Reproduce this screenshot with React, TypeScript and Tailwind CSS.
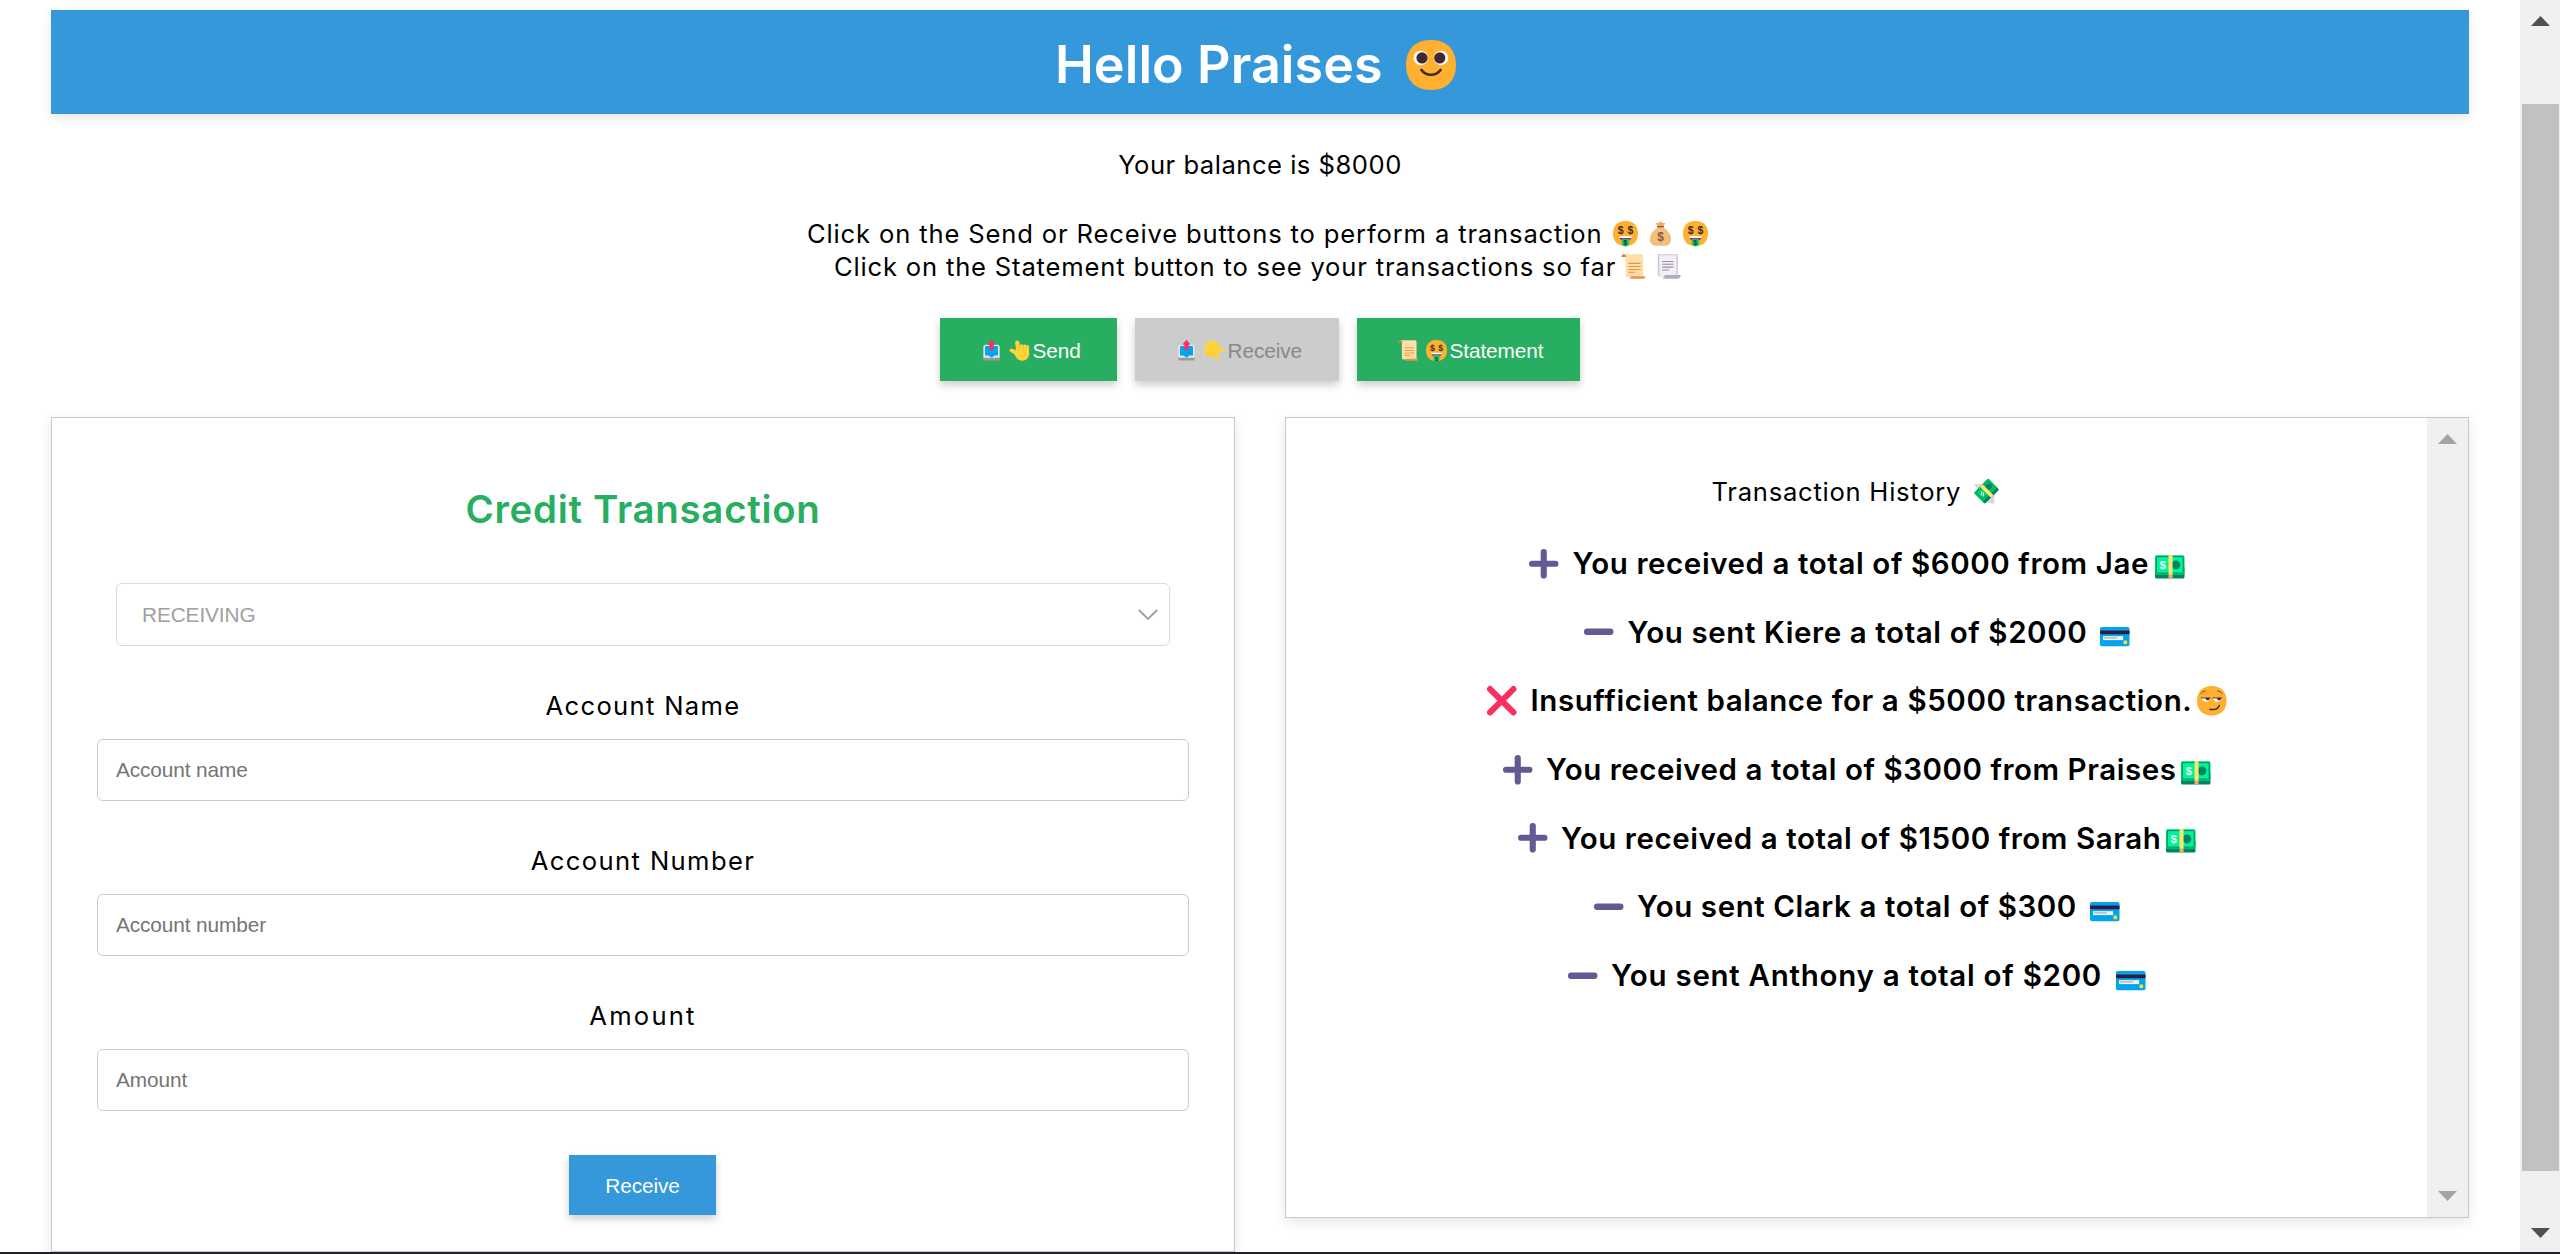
import type { ReactNode } from 'react';

type IconProps = { className?: string };

const Svg = ({ className = '', children }: { className?: string; children: ReactNode }) => (
  <svg viewBox="0 0 24 24" className={`block shrink-0 overflow-visible ${className}`} aria-hidden="true">
    {children}
  </svg>
);

const FACE = 'M12 0C20.2 0 24 5.2 24 12S20.2 24 12 24 0 18.800 0 12 3.800 0 12 0z';

const Dollar = ({ x, y, size, fill }: { x: number; y: number; size: number; fill: string }) => (
  <text x={x} y={y} fontSize={size} fontWeight="700" fontFamily="Liberation Sans, sans-serif" textAnchor="middle" fill={fill}>
    $
  </text>
);

const SmileFace = ({ className }: IconProps) => (
  <Svg className={className}>
    <path d={FACE} fill="#ffb02e" />
    <circle cx="7.1" cy="8.600" r="3.500" fill="#fff" />
    <circle cx="16.800" cy="8.600" r="3.500" fill="#fff" />
    <circle cx="7.700" cy="8.600" r="2.700" fill="#402a32" />
    <circle cx="16.200" cy="8.600" r="2.700" fill="#402a32" />
    <path d="M7.400 14.400C8.600 16 10.100 16.700 12 16.700S15.400 16 16.600 14.400" fill="none" stroke="#402a32" strokeWidth="1.250" strokeLinecap="round" />
  </Svg>
);

const MoneyFace = ({ className }: IconProps) => (
  <Svg className={className}>
    <path d={FACE} fill="#ffb02e" />
    <Dollar x={7.300} y={12.600} size={10} fill="#402a32" />
    <Dollar x={16.700} y={12.600} size={10} fill="#402a32" />
    <path d="M6 15.300h12c0 2.200-2.400 3.800-6 3.800s-6-1.600-6-3.800z" fill="#bb1d80" />
    <path d="M6 14.600h12v1.700H6.200z" fill="#fff" />
    <path d="M8.500 17.200h7v3.700a3.500 3.500 0 0 1-7 0z" fill="#00d26a" />
    <Dollar x={12} y={23.500} size={6.500} fill="#402a32" />
  </Svg>
);

const MoneyBag = ({ className }: IconProps) => (
  <Svg className={className}>
    <path d="M7.500 1.800l2.400.2L12 .2l2.100 1.800 2.500-.2L14.900 5H9.200z" fill="#f3ad61" />
    <path d="M9 6.200h6c4.200 3.200 7.200 6.700 7.200 11.300 0 4.200-2.800 6.300-6.300 6.300H8.100c-3.500 0-6.300-2.100-6.300-6.300C1.800 12.900 4.800 9.400 9 6.200z" fill="#f3c07b" />
    <path d="M9.300 5.600h5.400" stroke="#8c5543" strokeWidth="1.500" strokeLinecap="round" />
    <Dollar x={12} y={19.500} size={11.500} fill="#8c5543" />
  </Svg>
);

const Scroll = ({ className }: IconProps) => (
  <Svg className={className}>
    <path d="M2.500.3h16.700c1.300 0 2 .8 2 2v19.900H6.500c-1.300 0-2-.9-2-2V3z" fill="#ffdea7" />
    <path d="M.3 2.800C.3 1.200 1.300.3 2.700.3s2.200 1 2.200 2.500z" fill="#d3883e" />
    <path d="M9.500 21.300h13.800c0 1.500-1 2.500-2.500 2.500H6.500c1.900 0 2.900-1 3-2.500z" fill="#e19747" />
    <path d="M7.200 9h11.600M7.200 12h11.600M7.200 14.900h11.600M7.200 17.600h6.500" stroke="#e19747" strokeWidth="1" />
  </Svg>
);

const Page = ({ className }: IconProps) => (
  <Svg className={className}>
    <path d="M2.700.2h17.200c.6 0 1 .4 1 1V22H5C3 22 1.700 21 1.700 19V1.200c0-.6.4-1 1-1z" fill="#cdc4d6" />
    <path d="M3.200 1.200h16.300v19.600H7.500C6.900 23 3.200 22.500 3.200 19.200z" fill="#f3eef8" />
    <path d="M8.500 20.200h15.200c0 2.400-1.200 3.600-3.300 3.600H5.200c2.200 0 3.100-1.600 3.300-3.600z" fill="#b4acbc" />
    <path d="M6 7.200h10.800M6 9.900h10.800M6 12.600h10.800M6 15.400h6.500" stroke="#998ea4" strokeWidth="1" />
  </Svg>
);

const Outbox = ({ className }: IconProps) => (
  <Svg className={className}>
    <path d="M2.700 18h18.600v4.200c0 .7-.5 1.200-1.200 1.200H3.900c-.7 0-1.200-.5-1.200-1.200z" fill="#9b9b9b" />
    <path d="M5.300 5.300h13.400c1.500 0 2.600 1.100 2.600 2.600v12.300H2.700V7.900c0-1.500 1.100-2.600 2.600-2.600z" fill="#e6e6e6" />
    <path d="M6 6.800h12c.8 0 1.400.6 1.400 1.400v9.600h-4L12 20.400l-3.400-2.600h-4V8.200c0-.8.6-1.400 1.400-1.400z" fill="#00a6ed" />
    <path d="M11.300.5c.4-.5 1-.5 1.400 0l3.200 3.700c.4.6.1 1.300-.6 1.300h-.9v4.200a2.400 2.400 0 0 1-4.800 0V5.500h-.9c-.7 0-1-.7-.6-1.300z" fill="#f92f60" />
  </Svg>
);

const Hand = ({ className }: IconProps) => (
  <Svg className={className}>
    <path d="M7 3c-.2-3 4.400-3.500 4.800-.5l.6 4.200C13 4.300 15.500 4.200 16.100 6c.8-1.400 3.100-1.300 3.600.4 1.300-1 3.300-.3 3.300 1.700v7.700c0 4.500-3.400 7.900-7.900 7.900-3.300 0-5.600-1.500-7.200-4.200l-1.700-3.100-4.700-3c-2-1.400-.5-4.200 1.900-3.500l4.700 1.600z" fill="#ffd43b" />
    <path d="M12.300 6v4.600M16.200 6v4.300M19.800 6.700v3.400" stroke="#f5b62c" strokeWidth=".8" strokeLinecap="round" />
  </Svg>
);

const FlyingMoney = ({ className }: IconProps) => (
  <Svg className={className}>
    <path d="M0 5l8.500-.5L4.200 11zM12 22l7.500-8v10z" fill="#d9d9d9" />
    <g transform="rotate(-45 12 12)">
      <rect x="2.500" y="4.300" width="19.500" height="15" rx="1.200" fill="#008463" />
      <rect x="2.500" y="4.300" width="19.500" height="11.800" rx="1.200" fill="#00d26a" />
      <rect x="4.200" y="5.700" width="16" height="9" rx=".6" fill="none" stroke="#008463" strokeWidth=".9" />
      <circle cx="16.700" cy="10.200" r="3" fill="#008463" />
      <path d="M6 10.800l3-2M6.500 12.700l3-2" stroke="#f4f4f4" strokeWidth="1" />
      <path d="M10.700 4.300h3.600v15h-3.600z" fill="#ffe570" />
    </g>
  </Svg>
);

const Banknote = ({ className }: IconProps) => (
  <Svg className={className}>
    <rect x="0" y="14" width="24" height="10" rx="1.300" fill="#008463" />
    <rect x="0" y="5" width="24" height="16" rx="1.300" fill="#00d26a" />
    <rect x="1.100" y="6.200" width="21.800" height="13.400" rx=".5" fill="#00f397" stroke="#008463" strokeWidth=".7" />
    <circle cx="17" cy="13" r="3.600" fill="#008463" />
    <Dollar x={6.300} y={16.500} size={9.500} fill="#e9fff5" />
    <path d="M11 5h3.300v16H11z" fill="#ffe570" />
    <path d="M11 21h3.300v3H11z" fill="#f9a66c" />
  </Svg>
);

const Card = ({ className }: IconProps) => (
  <Svg className={className}>
    <rect x="0" y="8.200" width="24" height="15.600" rx="1.400" fill="#00a6ed" />
    <path d="M0 11h24v3H0z" fill="#321b41" />
    <path d="M2.500 15.600h16.300v3.200H2.500z" fill="#f4f4f4" />
    <path d="M3.500 17h10.300" stroke="#9b9b9b" strokeWidth=".8" />
    <rect x="19.100" y="19.200" width="3" height="3" rx=".4" fill="#fcd53f" />
  </Svg>
);

const SmirkFace = ({ className }: IconProps) => (
  <Svg className={className}>
    <path d={FACE} fill="#ffb02e" />
    <path d="M3.800 9.700h6.600c0 4.300-6.400 4-6.600 0zM13.200 9.700h6.600c-.2 4-6.600 4.300-6.600 0z" fill="#fff" />
    <path d="M7 9.700h3.300c0 2.400-3.200 2.600-3.300 0zM16.300 9.700h3.300c0 2.400-3.200 2.600-3.300 0z" fill="#402a32" />
    <path d="M3.500 9.700h7M13 9.700h7" stroke="#402a32" strokeWidth=".7" strokeLinecap="round" />
    <path d="M3.200 6.200C4.200 4.800 5.200 4.200 6.700 4M16.800 4c1.500.2 2.600.9 3.500 2.200" fill="none" stroke="#7a4a25" strokeWidth=".8" strokeLinecap="round" />
    <path d="M10.500 19c4 .6 6.800-.7 7.700-3.200" fill="none" stroke="#402a32" strokeWidth="1.200" strokeLinecap="round" />
  </Svg>
);

const Cross = ({ className }: IconProps) => (
  <Svg className={className}>
    <path d="M2.500 2.500l19 19M21.500 2.500l-19 19" stroke="#f92f60" strokeWidth="5" strokeLinecap="round" />
  </Svg>
);

const Plus = ({ className }: IconProps) => (
  <Svg className={className}>
    <path d="M2.500 12h19M12 2.500v19" stroke="#635994" strokeWidth="5" strokeLinecap="round" />
  </Svg>
);

const Minus = ({ className }: IconProps) => (
  <Svg className={className}>
    <path d="M2.600 12h18.800" stroke="#635994" strokeWidth="5.200" strokeLinecap="round" />
  </Svg>
);

const history = [
  { Lead: Plus, Tail: Banknote, text: 'You received a total of $6000 from Jae', fit: 'w-[582px] tracking-[0.583px]' },
  { Lead: Minus, Tail: Card, text: 'You sent Kiere a total of $2000', fit: 'w-[472px] tracking-[0.6px]' },
  { Lead: Cross, Tail: SmirkFace, text: 'Insufficient balance for a $5000 transaction.', fit: 'w-[666px] tracking-[0.59px]' },
  { Lead: Plus, Tail: Banknote, text: 'You received a total of $3000 from Praises', fit: 'w-[635px] tracking-[0.54px]' },
  { Lead: Plus, Tail: Banknote, text: 'You received a total of $1500 from Sarah', fit: 'w-[605px] tracking-[0.555px]' },
  { Lead: Minus, Tail: Card, text: 'You sent Clark a total of $300', fit: 'w-[453px] tracking-[0.57px]' },
  { Lead: Minus, Tail: Card, text: 'You sent Anthony a total of $200', fit: 'w-[505px] tracking-[0.72px]' },
];

const fields = [
  { label: 'Account Name', placeholder: 'Account name', tracking: 'tracking-[1.308px]' },
  { label: 'Account Number', placeholder: 'Account number', tracking: 'tracking-[1.399px]' },
  { label: 'Amount', placeholder: 'Amount', tracking: 'tracking-[2.21px]' },
];

const arial = "font-['Liberation_Sans',sans-serif] text-[20.8px] tracking-[-0.1px]";
const raised = 'shadow-[0_4px_8px_rgba(0,0,0,0.2)]';
const panel = 'h-full w-[1184px] border border-[#c8c8c8] shadow-[0_4px_12px_rgba(0,0,0,0.1)]';

const Triangle = ({ className = '' }: IconProps) => (
  <svg viewBox="0 0 19 10" className={`block h-[10px] w-[19px] ${className}`} aria-hidden="true">
    <path d="M9.500 0L19 10H0z" fill="currentColor" />
  </svg>
);

function Header() {
  return (
    <header className="flex h-[104px] shrink-0 items-center justify-center bg-[#3498db] pr-[9px] pt-[6px] shadow-[0_4px_10px_rgba(0,0,0,0.1)]">
      <h1 className="w-[351px] whitespace-nowrap text-[52px] font-semibold leading-none tracking-[0.085px] text-white">Hello Praises</h1>
      <SmileFace className="size-[50px]" />
    </header>
  );
}

function Intro() {
  return (
    <section className="mt-[34px] shrink-0 whitespace-nowrap">
      <p className="h-[33px] text-center tracking-[0.504px]">Your balance is $8000</p>
      <div className="mt-[36px] flex h-[33px] items-center justify-center pr-[5px]">
        <span className="w-[806px] tracking-[0.844px]">Click on the Send or Receive buttons to perform a transaction</span>
        <span className="flex gap-[10px]">
          <MoneyFace className="size-[25px]" />
          <MoneyBag className="size-[25px]" />
          <MoneyFace className="size-[25px]" />
        </span>
      </div>
      <div className="flex h-[33px] items-center justify-center pr-[5px]">
        <span className="w-[787px] tracking-[0.817px]">Click on the Statement button to see your transactions so far</span>
        <span className="flex gap-[10px]">
          <Scroll className="size-[25px]" />
          <Page className="size-[25px]" />
        </span>
      </div>
    </section>
  );
}

function Actions() {
  const base = `flex h-[63px] items-center pl-[40.500px] pt-[2px] ${arial} ${raised}`;
  return (
    <div className="mt-[35px] flex shrink-0 justify-center gap-[18px]">
      <button className={`${base} w-[177px] bg-[#27ae60] text-white`}>
        <Outbox className="mr-[7px] size-[21px]" />
        <Hand className="mr-[3px] size-[21px]" />
        <span>Send</span>
      </button>
      <button className={`${base} w-[204px] bg-[#ccc] text-[#888]`} disabled>
        <Outbox className="mr-[7px] size-[21px]" />
        <Hand className="mr-[3px] size-[21px] rotate-180" />
        <span>Receive</span>
      </button>
      <button className={`${base} w-[223px] bg-[#27ae60] text-white`}>
        <Scroll className="mr-[7px] size-[21px]" />
        <MoneyFace className="mr-[3px] size-[21px]" />
        <span>Statement</span>
      </button>
    </div>
  );
}

function CreditForm() {
  return (
    <section className={`${panel} flex flex-col items-center pt-[67px]`}>
      <h2 className="text-[38.400px] font-semibold leading-[48px] tracking-[0.72px] text-[#27ae60]">Credit Transaction</h2>
      <div className={`mt-[50px] flex h-[63px] w-[1054px] shrink-0 items-center justify-between rounded-[6px] border border-[#dbdbdb] pl-[25px] pr-[11.500px] text-[#a0a0a0] ${arial}`}>
        <span>RECEIVING</span>
        <svg viewBox="0 0 20 11" className="h-[11px] w-[20px]" fill="none" aria-hidden="true">
          <path d="M.8.8L10 9.800 19.200.8" stroke="#999" strokeWidth="1.800" />
        </svg>
      </div>
      {fields.map((f) => (
        <label key={f.label} className="mt-[44px] flex flex-col items-center">
          <span className={`h-[31px] leading-[31px] ${f.tracking}`}>{f.label}</span>
          <input
            placeholder={f.placeholder}
            className={`mt-[18px] h-[62px] w-[1092px] rounded-[6px] border border-[#ccc] px-[18px] placeholder:text-[#757575] ${arial}`}
          />
        </label>
      ))}
      <button className={`mr-[1px] mt-[44px] h-[60px] w-[147px] shrink-0 bg-[#3498db] text-white ${arial} ${raised}`}>Receive</button>
    </section>
  );
}

function History() {
  return (
    <section className={`${panel} flex`}>
      <div className="flex flex-1 flex-col pt-[56px]">
        <div className="flex h-[34px] items-center justify-center pr-[3px]">
          <span className="w-[262px] whitespace-nowrap tracking-[0.744px]">Transaction History</span>
          <FlyingMoney className="size-[25px]" />
        </div>
        <ul className="mt-[21px]">
          {history.map(({ Lead, Tail, text, fit }) => (
            <li key={text} className="flex h-[68.700px] items-center justify-center">
              <Lead className="mr-[14px] size-[29.500px]" />
              <span className={`whitespace-nowrap text-[29.500px] font-semibold ${fit}`}>{text}</span>
              <Tail className="size-[29.500px]" />
            </li>
          ))}
        </ul>
      </div>
      <div className="flex w-[41px] flex-col items-center justify-between bg-[#f0f0f0] py-[16px] text-[#a3a3a3]">
        <Triangle />
        <Triangle className="rotate-180" />
      </div>
    </section>
  );
}

export default function App() {
  return (
    <div className="flex h-[1254px] w-[2560px] flex-col overflow-hidden bg-white font-['Inter',sans-serif] text-[25.600px] leading-[33px] text-black">
      <div className="flex h-[1252px] shrink-0 overflow-hidden">
        <main className="flex w-[2520px] flex-col px-[51px] pt-[10px]">
          <Header />
          <Intro />
          <Actions />
          <div className="mt-[36px] flex shrink-0 items-start gap-[50px]">
            <div className="h-[835px]">
              <CreditForm />
            </div>
            <div className="h-[801px]">
              <History />
            </div>
          </div>
        </main>
        <div className="flex w-[40px] flex-col items-center bg-[#f0f0f0] pl-[1px] text-[#505050]">
          <Triangle className="mt-[16px]" />
          <div className="mt-[78px] h-[1067px] w-[37px] bg-[#c1c1c1]" />
          <Triangle className="mt-[57px] rotate-180" />
        </div>
      </div>
      <div className="h-[2px] shrink-0 bg-[#202124]" />
    </div>
  );
}
